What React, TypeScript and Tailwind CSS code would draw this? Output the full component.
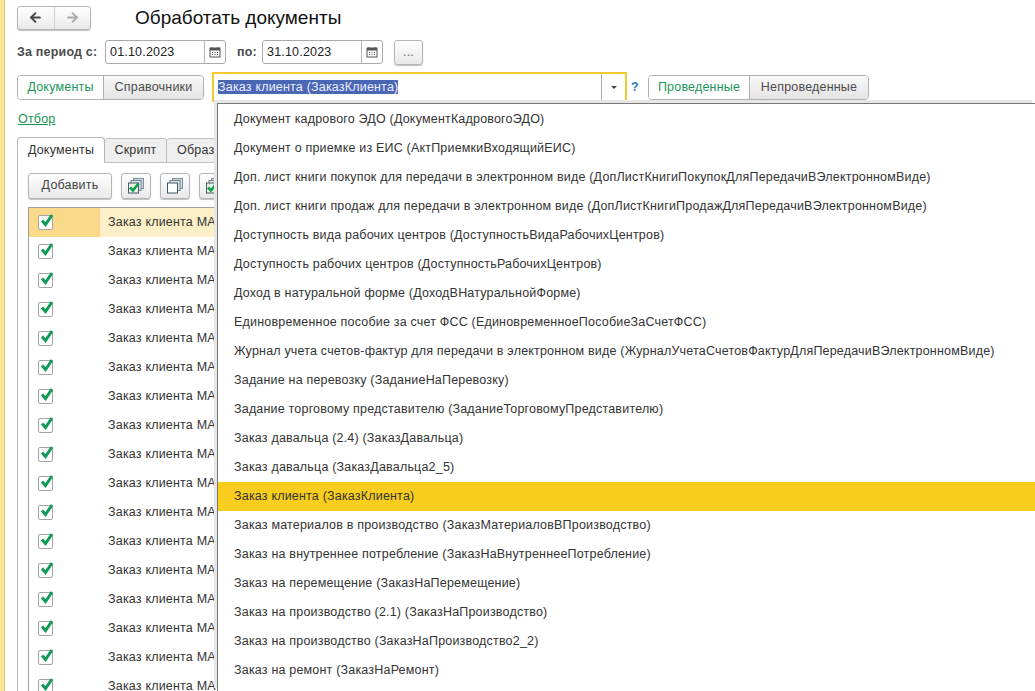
import { ArrowLeft, ArrowRight } from 'lucide-react'

const items = [
  'Документ кадрового ЭДО (ДокументКадровогоЭДО)',
  'Документ о приемке из ЕИС (АктПриемкиВходящийЕИС)',
  'Доп. лист книги покупок для передачи в электронном виде (ДопЛистКнигиПокупокДляПередачиВЭлектронномВиде)',
  'Доп. лист книги продаж для передачи в электронном виде (ДопЛистКнигиПродажДляПередачиВЭлектронномВиде)',
  'Доступность вида рабочих центров (ДоступностьВидаРабочихЦентров)',
  'Доступность рабочих центров (ДоступностьРабочихЦентров)',
  'Доход в натуральной форме (ДоходВНатуральнойФорме)',
  'Единовременное пособие за счет ФСС (ЕдиновременноеПособиеЗаСчетФСС)',
  'Журнал учета счетов-фактур для передачи в электронном виде (ЖурналУчетаСчетовФактурДляПередачиВЭлектронномВиде)',
  'Задание на перевозку (ЗаданиеНаПеревозку)',
  'Задание торговому представителю (ЗаданиеТорговомуПредставителю)',
  'Заказ давальца (2.4) (ЗаказДавальца)',
  'Заказ давальца (ЗаказДавальца2_5)',
  'Заказ клиента (ЗаказКлиента)',
  'Заказ материалов в производство (ЗаказМатериаловВПроизводство)',
  'Заказ на внутреннее потребление (ЗаказНаВнутреннееПотребление)',
  'Заказ на перемещение (ЗаказНаПеремещение)',
  'Заказ на производство (2.1) (ЗаказНаПроизводство)',
  'Заказ на производство (ЗаказНаПроизводство2_2)',
  'Заказ на ремонт (ЗаказНаРемонт)',
]

const btn = 'border border-[#b5b5b5] rounded-[3px] bg-gradient-to-b from-white to-[#e9e9e9] shadow-[0_1px_1px_rgba(0,0,0,0.25)]'

const CalendarIcon = () => (
  <svg width="12" height="12" viewBox="0 0 12 12">
    <rect x="1" y="2" width="10" height="9" fill="#fff" stroke="#555" />
    <rect x="1" y="2" width="10" height="2.5" fill="#555" />
    <path d="M3 1v2M9 1v2" stroke="#555" />
    <path d="M3 6.5h1M5.5 6.5h1M8 6.5h1M3 8.5h1M5.5 8.5h1M8 8.5h1" stroke="#555" />
  </svg>
)

const DateInput = ({ value }: { value: string }) => (
  <div className="flex h-[24px] w-[121px] items-center rounded-[3px] border border-[#a9a9a9] bg-white">
    <span className="flex-1 pl-[4px] text-[#222]">{value}</span>
    <span className="flex h-full w-[21px] items-center justify-center border-l border-[#b5b5b5]">
      <CalendarIcon />
    </span>
  </div>
)

const Tumbler = ({ on, off, onW, offW }: { on: string; off: string; onW: string; offW: string }) => (
  <div className="mt-px flex h-[25px] rounded-[4px] border border-[#b0b0b0]">
    <span className={`${onW} flex items-center justify-center rounded-l-[3px] bg-white text-[#1c9457]`}>{on}</span>
    <span className={`${offW} flex items-center justify-center rounded-r-[3px] border-l border-[#b0b0b0] bg-gradient-to-b from-[#f8f8f8] to-[#e4e4e4] text-[#4b4b4b]`}>{off}</span>
  </div>
)

const CheckBox = () => (
  <span className="relative block h-[15px] w-[15px] rounded-[2px] border border-[#a5a5a5] bg-white">
    <svg className="absolute -top-[3px] left-[1px]" width="14" height="15" viewBox="0 0 14 15">
      <path d="M2 7.5 L5.5 11.5 L12 2" fill="none" stroke="#0f9a55" strokeWidth="3" />
    </svg>
  </span>
)

const StackIcon = ({ check, front }: { check?: boolean; front: string }) => (
  <svg width="18" height="18" viewBox="0 0 18 18">
    <rect x="6.5" y="1.5" width="10" height="10" fill="#cfd6dc" stroke="#7f8f99" />
    <rect x="4" y="3.5" width="10" height="10" fill="#dfe4e8" stroke="#6f8290" />
    <rect x="1.5" y="6" width="10" height="10" fill={front} stroke="#3f5866" />
    {check && <path d="M3 10.5 L6 13.5 L11.5 6.5" fill="none" stroke="#12a04f" strokeWidth="2.8" />}
  </svg>
)

export default function App() {
  return (
    <div className="relative flex h-[691px] w-[1035px] overflow-hidden bg-white font-['Liberation_Sans',Arial,sans-serif] text-[12.5px] tracking-[0.19px] text-[#333]">
      <div className="w-[5px] shrink-0 border-r border-[#d8c978] bg-[#f8e594]" />
      <main className="min-w-0 flex-1 pl-[12px] pt-[5px]">
        {/* Title */}
        <div className="flex h-[25px] items-center">
          <div className={`${btn} flex h-[24px] w-[74px] text-[#555]`}>
            <span className="flex flex-1 items-center justify-center border-r border-[#d0d0d0]">
              <ArrowLeft size={15} strokeWidth={3} className="text-[#444]" />
            </span>
            <span className="flex flex-1 items-center justify-center">
              <ArrowRight size={15} strokeWidth={3} className="text-[#a8a8a8]" />
            </span>
          </div>
          <h1 className="ml-[44px] text-[19px] leading-none tracking-normal text-[#111]">Обработать документы</h1>
        </div>

        {/* Period */}
        <div className="mt-[10px] flex h-[24px] items-center">
          <span className="w-[88px] whitespace-nowrap font-bold text-[#4b4b4b]">За период с:</span>
          <DateInput value="01.10.2023" />
          <span className="ml-[11px] w-[25px] font-bold text-[#4b4b4b]">по:</span>
          <DateInput value="31.10.2023" />
          <span className={`${btn} ml-[11px] flex h-[25px] w-[29px] items-center justify-center text-[#666]`}>...</span>
        </div>

        {/* Selector row */}
        <div className="mt-[8px] flex h-[30px] items-center">
          <Tumbler on="Документы" off="Справочники" onW="w-[85px]" offW="w-[100px]" />
          <div className="ml-[8px] flex h-[30px] w-[415px] items-center border-2 border-[#f4c92f] bg-white">
            <div className="flex-1 pl-[4px] pt-px">
              <span className="bg-[#4a67b5] leading-[15px] text-[#eef]">Заказ клиента (ЗаказКлиента)</span>
            </div>
            <span className="flex h-full w-[24px] items-center justify-center border-l border-[#aaa]">
              <span className="border-x-[3px] border-t-[3px] border-x-transparent border-t-[#444]" />
            </span>
          </div>
          <span className="ml-[4px] w-[17px] font-bold text-[#2d7fb8]">?</span>
          <Tumbler on="Проведенные" off="Непроведенные" onW="w-[100px]" offW="w-[119px]" />
        </div>

        <a className="mt-[9px] block h-[17px] pl-px leading-[17px] text-[#1c9457] underline">Отбор</a>

        {/* Tabs */}
        <div className="mt-[9px] flex h-[26px] items-end">
          <span className="relative z-10 flex h-[26px] w-[88px] items-center justify-center rounded-t-[4px] border border-b-0 border-[#b5b5b5] bg-white text-[#333]">Документы</span>
          <span className="flex h-[25px] w-[62px] items-center justify-center rounded-t-[3px] border-y border-r border-[#c0c0c0] bg-[#efefef]">Скрипт</span>
          <span className="flex h-[25px] w-[62px] items-center rounded-t-[3px] border-y border-r border-[#c0c0c0] bg-[#efefef] pl-[10px]">Образцы</span>
        </div>

        {/* Tab panel */}
        <div className="-mt-px h-[540px] border-l border-t border-[#b5b5b5] pl-[10px] pt-[9px]">
          <div className="flex h-[27px] items-center">
            <span className={`${btn} flex h-[26px] w-[84px] items-center justify-center text-[#444]`}>Добавить</span>
            <span className={`${btn} ml-[9px] flex h-[26px] w-[30px] items-center justify-center`}>
              <StackIcon check front="#eef4e8" />
            </span>
            <span className={`${btn} ml-[9px] flex h-[26px] w-[30px] items-center justify-center`}>
              <StackIcon front="#ffffff" />
            </span>
            <span className={`${btn} ml-[9px] flex h-[26px] w-[30px] items-center justify-center`}>
              <StackIcon check front="#eef4e8" />
            </span>
          </div>
          <div className="mt-[8px] w-[190px] border-l border-t border-[#a0a0a0]">
            {Array.from({ length: 17 }, (_, i) => (
              <div key={i} className={`flex h-[29px] items-center ${i === 0 ? 'bg-[#fdf0c8]' : ''}`}>
                <div className={`flex h-full w-[71px] shrink-0 items-center pl-[9px] ${i === 0 ? 'bg-[#fad98a]' : ''}`}>
                  <CheckBox />
                </div>
                <span className="ml-[8px] whitespace-nowrap">Заказ клиента МА</span>
              </div>
            ))}
          </div>
        </div>
      </main>

      {/* Dropdown list */}
      <div className="absolute left-[217px] right-0 top-[103px] bottom-0 overflow-hidden border-l border-t border-[#777] bg-white pt-px shadow-[-3px_-3px_0_#e6e6e6]">
        {items.map((item) => (
          <div
            key={item}
            className={`flex h-[29px] items-center whitespace-nowrap pl-[16px] ${item === 'Заказ клиента (ЗаказКлиента)' ? 'bg-[#f9cd1d]' : ''}`}
          >
            {item}
          </div>
        ))}
      </div>
    </div>
  )
}
